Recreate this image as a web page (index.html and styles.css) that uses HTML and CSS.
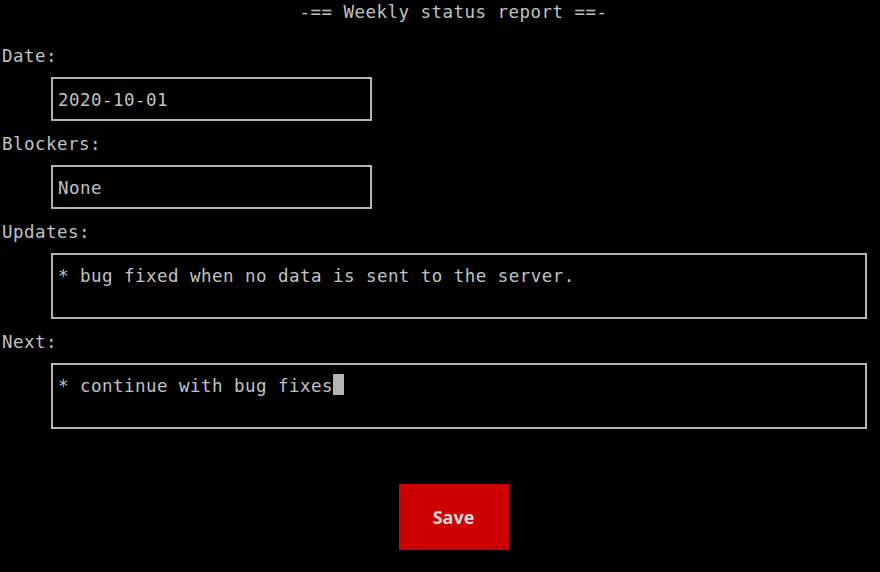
FILE: index.html
```html
<!DOCTYPE html>
<html>
<head>
<meta charset="utf-8">
<link rel="stylesheet" href="styles.css">
</head>
<body>
<div class="screen">
  <div class="title">-== Weekly status report ==-</div>
  <div class="field">
    <div class="label">Date:</div>
    <div class="box box-short">2020-10-01</div>
  </div>
  <div class="field">
    <div class="label">Blockers:</div>
    <div class="box box-short">None</div>
  </div>
  <div class="field">
    <div class="label">Updates:</div>
    <div class="box box-wide">* bug fixed when no data is sent to the server.</div>
  </div>
  <div class="field">
    <div class="label">Next:</div>
    <div class="box box-wide"><span>* continue with bug fixes</span><span class="cursor"></span></div>
  </div>
  <div class="actions">
    <button class="save">Save</button>
  </div>
</div>
</body>
</html>
```
FILE: styles.css
```css
html, body {
  margin: 0;
  padding: 0;
  background: #000000;
  width: 880px;
  height: 572px;
  overflow: hidden;
}

.screen {
  font-family: "DejaVu Sans Mono", monospace;
  font-size: 17.5px;
  letter-spacing: 0.46px;
  line-height: 22px;
  color: #c0c2c4;
  padding: 0 2px;
  white-space: nowrap;
}

.title {
  text-align: center;
  padding-left: 27px;
  padding-top: 1px;
  height: 21px;
  margin-bottom: 22px;
}

.field {
  display: flex;
  flex-direction: column;
}

.label {
  padding-top: 1px;
  height: 21px;
}

.box {
  margin: 11px 0 11px 49px;
  border: 2px solid #b4b4b4;
  padding: 10px 5px 8px;
  height: 22px;
  box-sizing: content-box;
  display: flex;
  align-items: flex-start;
  white-space: pre;
}

.box-short {
  width: 307px;
}

.box-wide {
  width: 802px;
  height: 44px;
}

.cursor {
  display: inline-block;
  width: 11px;
  height: 21px;
  margin-top: -1px;
  background: #b4b4b4;
}

.actions {
  display: flex;
  justify-content: center;
  padding-left: 27px;
  margin-top: 44px;
}

.save {
  width: 110px;
  height: 66px;
  border: none;
  background: #cc0000;
  color: #d9d9d9;
  font-family: "Open Sans", sans-serif;
  font-weight: 700;
  font-size: 18px;
  letter-spacing: 0;
  padding: 0;
}
```
